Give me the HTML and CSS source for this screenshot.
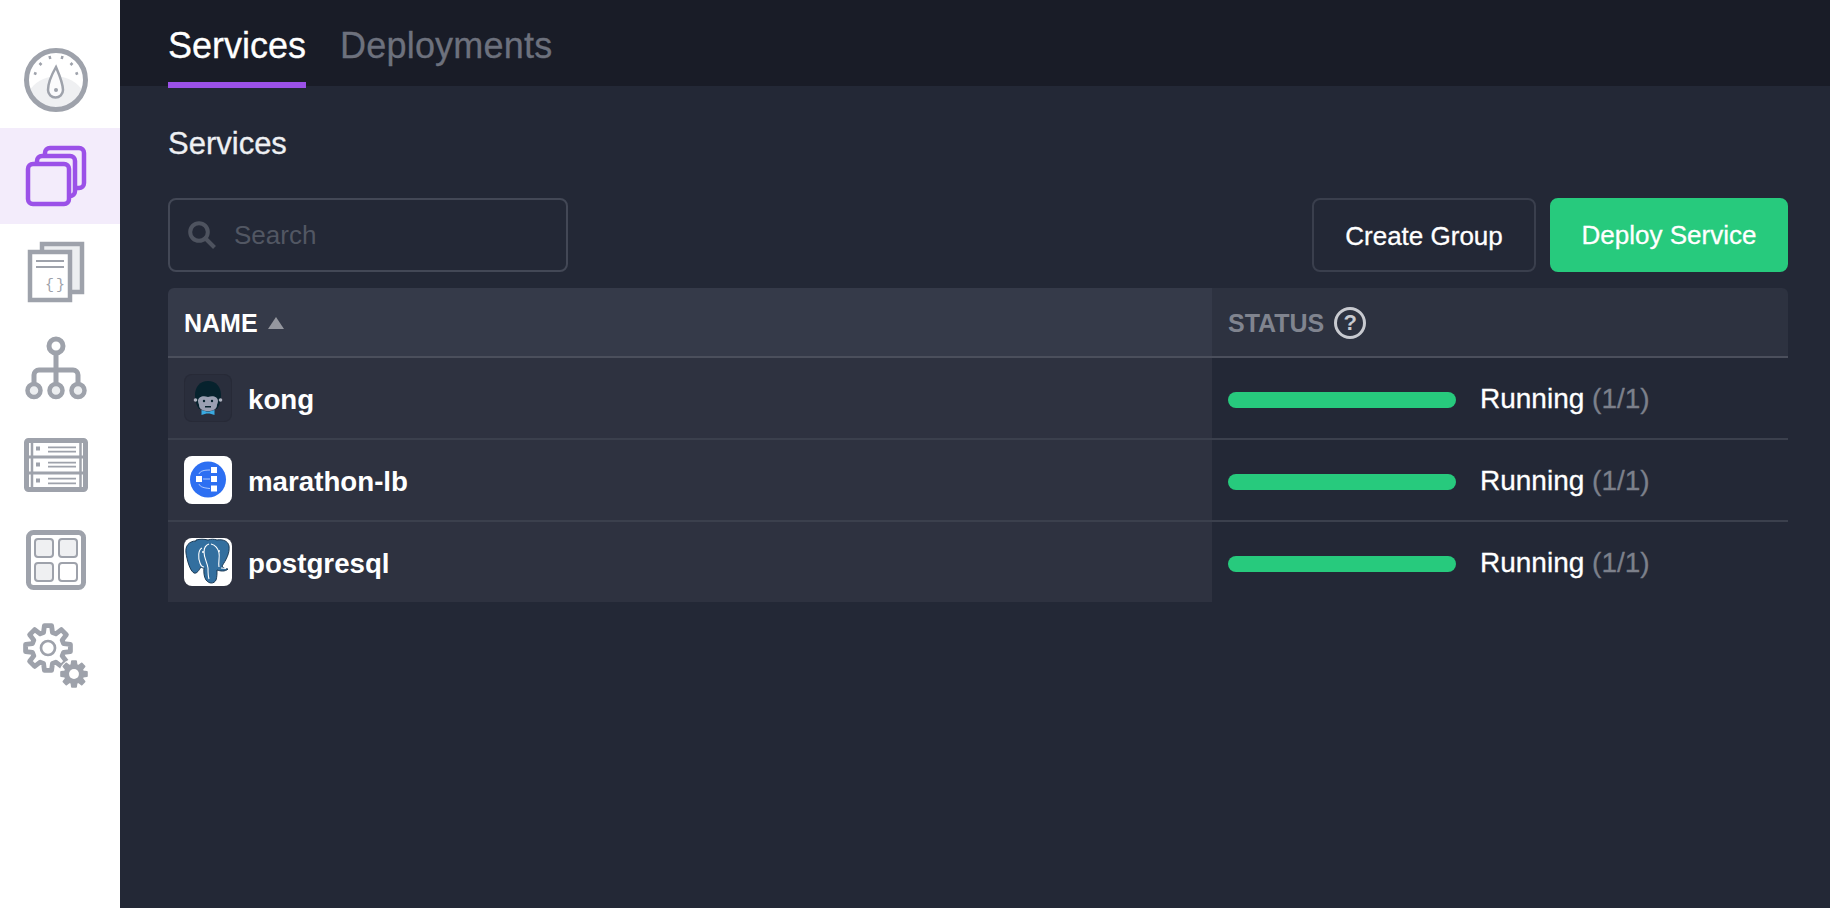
FILE: index.html
```html
<!DOCTYPE html>
<html lang="en">
<head>
    <meta charset="UTF-8">
    <meta name="viewport" content="width=device-width, initial-scale=1.0">
    <title>Services</title>
    <link rel="stylesheet" href="styles.css">
</head>
<body>
    <div class="layout">
        <nav class="sidebar">
            <a class="nav-item">
                <svg class="nav-icon" viewBox="0 0 112 96">
                    <path class="soft" d="M28.500 60A30 30 0 0 0 83.500 60A32 32 0 0 0 28.500 60z"/>
                    <circle class="ring" cx="56" cy="48" r="29.500"/>
                    <path class="face" d="M56 35c3 7 7 16 7 23a7.500 7.500 0 0 1-15 0c0-7 4-16 8-23z"/>
                    <circle class="dot" cx="56" cy="58" r="2"/>
                    <path class="thin" d="M34 41l2.500 1M39.500 31l2 2M49.500 24l.8 3M62.500 24l-.8 3M72.500 31l-2 2M78 41l-2.500 1"/>
                </svg>
            </a>
            <a class="nav-item active">
                <svg class="nav-icon" viewBox="0 0 112 96">
                    <rect class="layer" x="45" y="20" width="39" height="40" rx="5"/>
                    <rect class="layer" x="37" y="28" width="38" height="40" rx="5"/>
                    <rect class="layer" x="28" y="36" width="41" height="40" rx="5"/>
                </svg>
            </a>
            <a class="nav-item">
                <svg class="nav-icon" viewBox="0 0 112 96">
                    <rect class="soft-line" x="42" y="20" width="40" height="48"/>
                    <rect class="page" x="30" y="28" width="40" height="48"/>
                    <path class="hair" d="M36 37h28M36 43h28"/>
                    <text class="brace" x="56" y="65" text-anchor="middle">{}</text>
                </svg>
            </a>
            <a class="nav-item">
                <svg class="nav-icon" viewBox="0 0 112 96">
                    <path class="line" d="M56 34v30M34 64V55a5 5 0 0 1 5-5h34a5 5 0 0 1 5 5v9"/>
                    <circle class="line-white" cx="56" cy="26" r="7"/>
                    <circle class="soft-line" cx="34" cy="70.500" r="6.500"/>
                    <circle class="soft-line" cx="56" cy="70.500" r="6.500"/>
                    <circle class="soft-line" cx="78" cy="70.500" r="6.500"/>
                </svg>
            </a>
            <a class="nav-item">
                <svg class="nav-icon" viewBox="0 0 112 96">
                    <rect class="line-white" x="26.500" y="24.500" width="59" height="49" rx="2"/>
                    <path class="thin" d="M32 24v50M80.500 24v50"/>
                    <path class="line-mid" d="M26 41h60M26 57h60"/>
                    <path class="dot-line" d="M36 32.500h4M36 48.500h4M36 64.500h4"/>
                    <path class="hair" d="M48 31.300h28M48 35.700h28M48 46.700h28M48 50.700h28M48 62.700h28M48 67.300h28"/>
                </svg>
            </a>
            <a class="nav-item">
                <svg class="nav-icon" viewBox="0 0 112 96">
                    <rect class="ring" x="28.500" y="20.500" width="55" height="55" rx="5"/>
                    <rect class="tile" x="35" y="27" width="18" height="18" rx="3"/>
                    <rect class="tile" x="59" y="27" width="18" height="18" rx="3"/>
                    <rect class="tile" x="35" y="51" width="18" height="18" rx="3"/>
                    <rect class="tile-empty" x="59" y="51" width="18" height="18" rx="3"/>
                </svg>
            </a>
            <a class="nav-item">
                <svg class="nav-icon" viewBox="0 0 112 96">
                    <g transform="translate(48 40) scale(1.080)">
                        <polygon class="gear" points="14.42,-4.13 20.74,-3.29 20.74,3.29 14.42,4.13 13.12,7.27 16.99,12.34 12.34,16.99 7.27,13.12 4.13,14.42 3.29,20.74 -3.29,20.74 -4.13,14.42 -7.27,13.12 -12.34,16.99 -16.99,12.34 -13.12,7.27 -14.42,4.13 -20.74,3.29 -20.74,-3.29 -14.42,-4.13 -13.12,-7.27 -16.99,-12.34 -12.34,-16.99 -7.27,-13.12 -4.13,-14.42 -3.29,-20.74 3.29,-20.74 4.13,-14.42 7.27,-13.12 12.34,-16.99 16.99,-12.34 13.12,-7.27"/>
                        <circle class="thin" r="6.500"/>
                    </g>
                    <g transform="translate(74 66) scale(.620)">
                        <circle class="gear-hole" r="24"/>
                        <polygon class="gear-small" points="14.42,-4.13 20.74,-3.29 20.74,3.29 14.42,4.13 13.12,7.27 16.99,12.34 12.34,16.99 7.27,13.12 4.13,14.42 3.29,20.74 -3.29,20.74 -4.13,14.42 -7.27,13.12 -12.34,16.99 -16.99,12.34 -13.12,7.27 -14.42,4.13 -20.74,3.29 -20.74,-3.29 -14.42,-4.13 -13.12,-7.27 -16.99,-12.34 -12.34,-16.99 -7.27,-13.12 -4.13,-14.42 -3.29,-20.74 3.29,-20.74 4.13,-14.42 7.27,-13.12 12.34,-16.99 16.99,-12.34 13.12,-7.27"/>
                        <circle class="gear-hole" r="8"/>
                    </g>
                </svg>
            </a>
        </nav>

        <div class="content">
            <header class="tabs">
                <a class="tab active">Services</a>
                <a class="tab">Deployments</a>
            </header>

            <main class="page-body">
                <h1 class="title">Services</h1>

                <div class="toolbar">
                    <label class="search">
                        <svg class="search-icon" viewBox="0 0 28 28">
                            <circle cx="11" cy="11" r="8.800"/>
                            <path d="M17 17l9.500 9.500"/>
                        </svg>
                        <input type="text" placeholder="Search">
                    </label>
                    <div class="actions">
                        <button class="btn btn-outline">Create Group</button>
                        <button class="btn btn-primary">Deploy Service</button>
                    </div>
                </div>

                <div class="table">
                    <div class="cell-head name-head">NAME <span class="sort-arrow"></span></div>
                    <div class="cell-head status-head">
                        STATUS
                        <span class="help">?</span>
                    </div>

                    <div class="cell name-cell">
                        <span class="app-icon icon-kong">
                            <svg viewBox="0 0 48 48">
                                <path fill="#06222d" d="M24 7c-8 0-13 6-13 14 0 5 1 10 4 14h18c3-4 4-9 4-14 0-8-5-14-13-14z"/>
                                <circle fill="#aeb2bf" cx="11.500" cy="26" r="1.800"/>
                                <circle fill="#aeb2bf" cx="36.500" cy="26" r="1.800"/>
                                <path fill="#9aa0b2" d="M14 27c0-4 5-6 10-4 5-2 10 0 10 4 0 2-1 3-1 4 0 4-4 6-9 6s-9-2-9-6c0-1-1-2-1-4z"/>
                                <circle fill="#06222d" cx="20" cy="27" r="1.200"/>
                                <circle fill="#06222d" cx="28" cy="27" r="1.200"/>
                                <path fill="#06222d" d="M21 32h6v1.500h-6z"/>
                                <path fill="#39a9e0" d="M17.500 36l5 1.500h3l5-1.500v5l-5-1.500h-3l-5 1.500z"/>
                            </svg>
                        </span>
                        <span class="app-name">kong</span>
                    </div>
                    <div class="cell status-cell">
                        <span class="bar"></span>
                        <span class="state">Running <span class="count">(1/1)</span></span>
                    </div>

                    <div class="cell name-cell">
                        <span class="app-icon icon-white">
                            <svg viewBox="0 0 48 48">
                                <circle fill="#2d6ff2" cx="24" cy="23.500" r="18"/>
                                <path fill="#fff" d="M12 20h6v6h-6zM27 11h6v6h-6zM27 20h6v6h-6zM27 29.500h6v6h-6z"/>
                                <path fill="none" stroke="#cfe0ff" stroke-width=".8" d="M19 23h7M15 18c1-3 5-4 11-4M15 28c1 3 5 4 11 4.500"/>
                            </svg>
                        </span>
                        <span class="app-name">marathon-lb</span>
                    </div>
                    <div class="cell status-cell">
                        <span class="bar"></span>
                        <span class="state">Running <span class="count">(1/1)</span></span>
                    </div>

                    <div class="cell name-cell">
                        <span class="app-icon icon-white">
                            <svg viewBox="0 0 48 48">
                                <path fill="#336f9f" stroke="#1b3a55" stroke-width="1" d="M12 3C5 3 1 8 2 15c1 7 4 18 8 20 3 1 5-3 7-6 1 1 2 1 3 1-.5 4 0 9 2 12 3 4 8 4 10 0 1-3 1-6 1-10 3 1 8 2 11-1-3 0-5-1-6-3 4-6 8-13 7-20-1-5-6-7-12-6-3-1-6-1-9 0-4-1-8-1-12-.0z"/>
                                <path fill="none" stroke="#fff" stroke-width="1.100" d="M18 10c-4 2-4 10-2 15 1 3 3 4 4 4M27 6c4 1 7 4 8 9 1 4-1 9 0 14M25 6c-3 1-5 4-5 8 0 6 3 10 4 16 0 3 0 8 1 11M37 30l5 .5"/>
                                <circle fill="#fff" cx="19" cy="14" r="1"/>
                                <circle fill="#fff" cx="35" cy="13" r="1"/>
                            </svg>
                        </span>
                        <span class="app-name">postgresql</span>
                    </div>
                    <div class="cell status-cell">
                        <span class="bar"></span>
                        <span class="state">Running <span class="count">(1/1)</span></span>
                    </div>
                </div>
            </main>
        </div>
    </div>
</body>
</html>
```

FILE: styles.css
```css
* {
    box-sizing: border-box;
}
html, body {
    height: 100%;
}
body {
    margin: 0;
    font-family: "Liberation Sans", Arial, sans-serif;
    color: #fff;
    background-color: #232836;
    overflow: hidden;
}
.layout {
    display: flex;
    height: 100%;
}

/* sidebar */
.sidebar {
    width: 120px;
    flex-shrink: 0;
    padding-top: 32px;
    background-color: #fff;
}
.nav-item {
    display: block;
    height: 96px;
}
.nav-item.active {
    background-color: #f3ecfb;
}
.nav-icon {
    display: block;
    width: 112px;
    height: 96px;
}
.line, .line-white, .soft-line, .page, .ring, .gear, .gear-small, .thin, .hair, .face, .line-mid, .dot-line, .tile, .tile-empty {
    stroke: #9ea2ab;
    fill: none;
}
.line {
    stroke-width: 5;
}
.line-white {
    stroke-width: 5;
    fill: #fff;
}
.ring {
    stroke-width: 5;
}
.soft {
    fill: #eff0f2;
}
.soft-line {
    stroke-width: 4.500;
    fill: #eceef0;
}
.page {
    stroke-width: 4.500;
    fill: #fff;
}
.thin {
    stroke-width: 2.500;
}
.hair {
    stroke-width: 1.800;
}
.line-mid {
    stroke-width: 3;
}
.dot-line {
    stroke-width: 4;
}
.face {
    stroke-width: 2.500;
    fill: #fbfbfc;
}
.dot {
    fill: #9ea2ab;
}
.layer {
    stroke: #9b51e8;
    stroke-width: 4.500;
    fill: #f3ecfb;
}
.brace {
    font-family: "Liberation Mono", monospace;
    font-size: 15px;
    letter-spacing: 2px;
    fill: #9ea2ab;
}
.tile {
    stroke-width: 2;
    fill: #eff0f2;
}
.tile-empty {
    stroke-width: 2;
}
.gear {
    stroke-width: 4.500;
    stroke-linejoin: round;
}
.gear-small {
    stroke-width: 3;
    stroke-linejoin: round;
    fill: #9ea2ab;
}
.gear-hole {
    fill: #fff;
}

/* tabs */
.content {
    flex: 1;
    min-width: 0;
}
.tabs {
    display: flex;
    gap: 34px;
    height: 86px;
    padding-left: 48px;
    background-color: #191c27;
}
.tab {
    height: 88px;
    padding-top: 25px;
    font-size: 36px;
    line-height: 42px;
    letter-spacing: .2px;
    color: #6d717d;
    -webkit-text-stroke: .3px;
}
.tab.active {
    color: #fff;
    letter-spacing: 0;
    border-bottom: 6px solid #9b51e8;
}

/* page */
.page-body {
    padding: 39px 42px 0 48px;
}
.title {
    margin: 0;
    font-size: 31px;
    line-height: 38px;
    font-weight: normal;
    color: #eef0f3;
    -webkit-text-stroke: .3px;
}
.toolbar {
    display: flex;
    justify-content: space-between;
    margin-top: 35px;
}
.search {
    display: flex;
    align-items: center;
    gap: 18px;
    width: 400px;
    height: 74px;
    padding-left: 18px;
    border: 2px solid #434856;
    border-radius: 8px;
}
.search-icon {
    width: 28px;
    height: 28px;
    fill: none;
    stroke: #4e535f;
    stroke-width: 4;
    flex-shrink: 0;
}
.search input {
    width: 300px;
    padding: 0;
    border: 0;
    outline: 0;
    background: transparent;
    font-family: inherit;
    font-size: 26px;
    color: #fff;
}
.search input::placeholder {
    color: #525763;
    opacity: 1;
}
.actions {
    display: flex;
    gap: 14px;
}
.btn {
    height: 74px;
    border: 2px solid #3a3f4d;
    border-radius: 8px;
    background: transparent;
    font-family: inherit;
    font-size: 26px;
    color: #fff;
    -webkit-text-stroke: .3px;
}
.btn-outline {
    width: 224px;
    padding: 3px 0 0;
}
.btn-primary {
    width: 238px;
    padding: 0;
    border-color: #27ca7d;
    background-color: #27ca7d;
}

/* table */
.table {
    display: grid;
    grid-template-columns: 1044px 1fr;
    grid-template-rows: 70px 82px 82px 80px;
    margin-top: 16px;
}
.cell-head {
    display: flex;
    align-items: center;
    padding: 2px 0 0 16px;
    font-size: 25px;
    font-weight: bold;
    border-bottom: 2px solid #4b4f5c;
}
.name-head {
    background-color: #353a49;
    border-radius: 6px 0 0 0;
}
.status-head {
    gap: 10px;
    color: #80848f;
    background-color: #2d3240;
    border-radius: 0 6px 0 0;
}
.sort-arrow {
    width: 0;
    height: 0;
    margin-left: 10px;
    border-left: 8px solid transparent;
    border-right: 8px solid transparent;
    border-bottom: 12px solid #95979f;
}
.help {
    display: flex;
    align-items: center;
    justify-content: center;
    width: 32px;
    height: 32px;
    border: 3px solid #c8cad0;
    border-radius: 50%;
    font-size: 22px;
    color: #c8cad0;
}
.cell {
    display: flex;
    align-items: center;
    padding-left: 16px;
    border-bottom: 2px solid #3b404d;
}
.cell:nth-last-child(-n+2) {
    border-bottom: 0;
}
.name-cell {
    gap: 16px;
    background-color: #2e3240;
}
.status-cell {
    gap: 24px;
    padding-top: 4px;
}
.app-icon {
    display: block;
    width: 48px;
    height: 48px;
    border-radius: 8px;
    overflow: hidden;
    flex-shrink: 0;
}
.app-icon svg {
    display: block;
    width: 48px;
    height: 48px;
}
.icon-kong {
    background-color: #2a2e3c;
    box-shadow: inset 0 0 0 1px #272a37;
}
.icon-white {
    background-color: #fff;
}
.app-name {
    padding-top: 3px;
    font-size: 27.700px;
    font-weight: bold;
}
.bar {
    width: 228px;
    height: 16px;
    border-radius: 8px;
    background-color: #27ca7d;
}
.state {
    margin-bottom: 3px;
    font-size: 28px;
    -webkit-text-stroke: .3px;
}
.count {
    color: #7c808b;
}
```
